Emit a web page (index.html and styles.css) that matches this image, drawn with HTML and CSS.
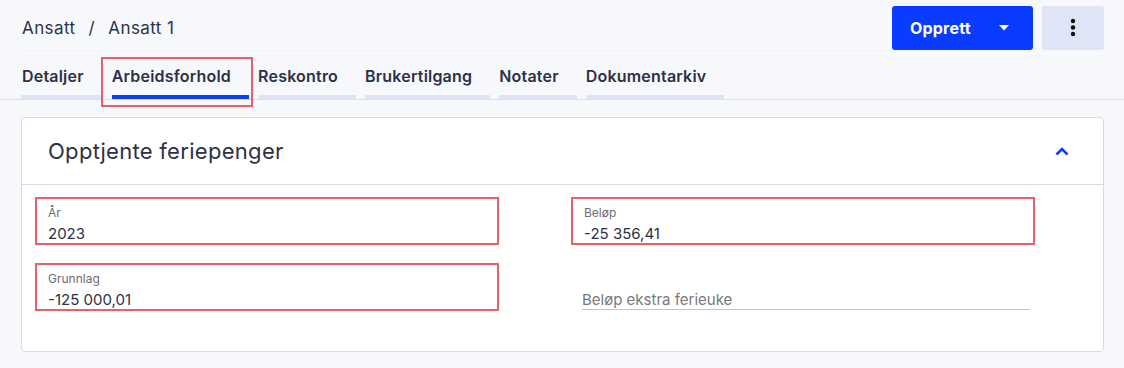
FILE: index.html
```html
<!DOCTYPE html>
<html lang="no">
<head>
  <meta charset="UTF-8">
  <meta name="viewport" content="width=device-width, initial-scale=1.0">
  <title>Ansatt 1</title>
  <link rel="stylesheet" href="styles.css">
</head>
<body>

  <!-- Top bar: breadcrumb and actions -->
  <div class="topbar">
    <div class="breadcrumb">
      <span>Ansatt</span>
      <span class="sep">/</span>
      <span>Ansatt 1</span>
    </div>
    <div class="actions">
      <button class="btn-primary">
        Opprett
        <svg class="caret" width="10" height="6" viewBox="0 0 10 6"><path d="M0 0h10L5 5.5z" fill="#fff"/></svg>
      </button>
      <button class="btn-more" aria-label="Mer">
        <svg width="6" height="20" viewBox="0 0 6 20">
          <circle cx="3" cy="3" r="2.2" fill="#111"/>
          <circle cx="3" cy="9.5" r="2.2" fill="#111"/>
          <circle cx="3" cy="16" r="2.2" fill="#111"/>
        </svg>
      </button>
    </div>
  </div>

  <!-- Tabs -->
  <nav class="tabs">
    <a class="tab tab-first">Detaljer</a>
    <a class="tab active mark">Arbeidsforhold</a>
    <a class="tab">Reskontro</a>
    <a class="tab">Brukertilgang</a>
    <a class="tab">Notater</a>
    <a class="tab">Dokumentarkiv</a>
  </nav>

  <!-- Card -->
  <section class="card">
    <div class="card-header">
      <h2>Opptjente feriepenger</h2>
      <svg width="14" height="9" viewBox="0 0 14 9"><path d="M1.5 7.5L7 2l5.5 5.5" fill="none" stroke="#0a3cff" stroke-width="2.6"/></svg>
    </div>
    <div class="card-body">
      <div class="field mark-box">
        <div class="field-label">År</div>
        <div class="field-value">2023</div>
      </div>
      <div class="field mark-box">
        <div class="field-label">Beløp</div>
        <div class="field-value">-25 356,41</div>
      </div>
      <div class="field mark-box">
        <div class="field-label">Grunnlag</div>
        <div class="field-value">-125 000,01</div>
      </div>
      <div class="field field-empty">
        <div class="field-label"></div>
        <div class="field-value placeholder">Beløp ekstra ferieuke</div>
      </div>
    </div>
  </section>

</body>
</html>
```

FILE: styles.css
```css
/* Basic page */
body {
  margin: 0;
  background-color: #f7f8fc;
  font-family: Inter, "Noto Sans", sans-serif;
  color: #2c3146;
}

/* Top bar */
.topbar {
  display: flex;
  justify-content: space-between;
  align-items: center;
  margin: 0 20px 0 21px;
  padding: 6px 0 3px;
  border-bottom: 1px solid #ffffff;
}

.breadcrumb {
  font-size: 17px;
  letter-spacing: 0.4px;
  padding-left: 1px;
  margin-top: -1px;
}

.breadcrumb .sep {
  margin: 0 8px;
}

.actions {
  display: flex;
  gap: 9px;
}

.btn-primary {
  display: flex;
  align-items: center;
  width: 141px;
  height: 44px;
  padding: 0 0 0 18px;
  border: none;
  border-radius: 3px;
  background-color: #0a3cff;
  color: #fff;
  font-family: inherit;
  font-size: 16px;
  font-weight: 700;
  letter-spacing: 0.2px;
}

.btn-primary .caret {
  margin-left: 28px;
}

.btn-more {
  display: flex;
  justify-content: center;
  align-items: center;
  width: 62px;
  height: 44px;
  border: none;
  border-radius: 3px;
  background-color: #dfe4f7;
}

/* Tabs */
.tabs {
  display: flex;
  gap: 9px;
  padding-left: 21px;
  border-bottom: 1px solid #dcdfe7;
}

.tab {
  padding: 12px 18px 9px 0;
  border-bottom: 4px solid #dfe4f5;
  font-size: 16px;
  font-weight: 600;
  line-height: 20px;
  color: #2c3146;
  letter-spacing: 0.2px;
}

.tab-first {
  padding-left: 1px;
}

.tab.active {
  border-bottom-color: #0a3cff;
  margin-left: 1px;
}

/* red annotation frames */
.mark {
  position: relative;
}

.mark::after {
  content: "";
  position: absolute;
  top: 3px;
  left: -11px;
  right: -4px;
  bottom: -12px;
  border: 2px solid #e8606a;
}

.mark-box {
  border: 2px solid #e8606a;
}

/* Card */
.card {
  margin: 17px 20px 0 21px;
  background-color: #fff;
  border: 1px solid #d8dade;
  border-radius: 4px;
}

.card-header {
  display: flex;
  justify-content: space-between;
  align-items: center;
  height: 66px;
  padding: 0 34px 0 26px;
  border-bottom: 1px solid #d8dade;
}

.card-header h2 {
  margin: 0;
  font-size: 22px;
  font-weight: 400;
  letter-spacing: 0.3px;
  color: #2c3146;
}

.card-body {
  display: grid;
  grid-template-columns: 464px 464px;
  column-gap: 72px;
  row-gap: 18px;
  padding: 12px 0 40px 13px;
}

.field {
  padding: 6px 11px 0;
  height: 48px;
  box-sizing: border-box;
}

.field-label {
  height: 15px;
  font-size: 12px;
  line-height: 15px;
  color: #6b6d73;
  margin-bottom: 5px;
}

.field-value {
  font-size: 15px;
  line-height: 18px;
  color: #2c3146;
}

.field-empty {
  padding: 8px 5px 0 11px;
}

.placeholder {
  color: #77797e;
  border-bottom: 1px solid #c2c3c6;
}
```
